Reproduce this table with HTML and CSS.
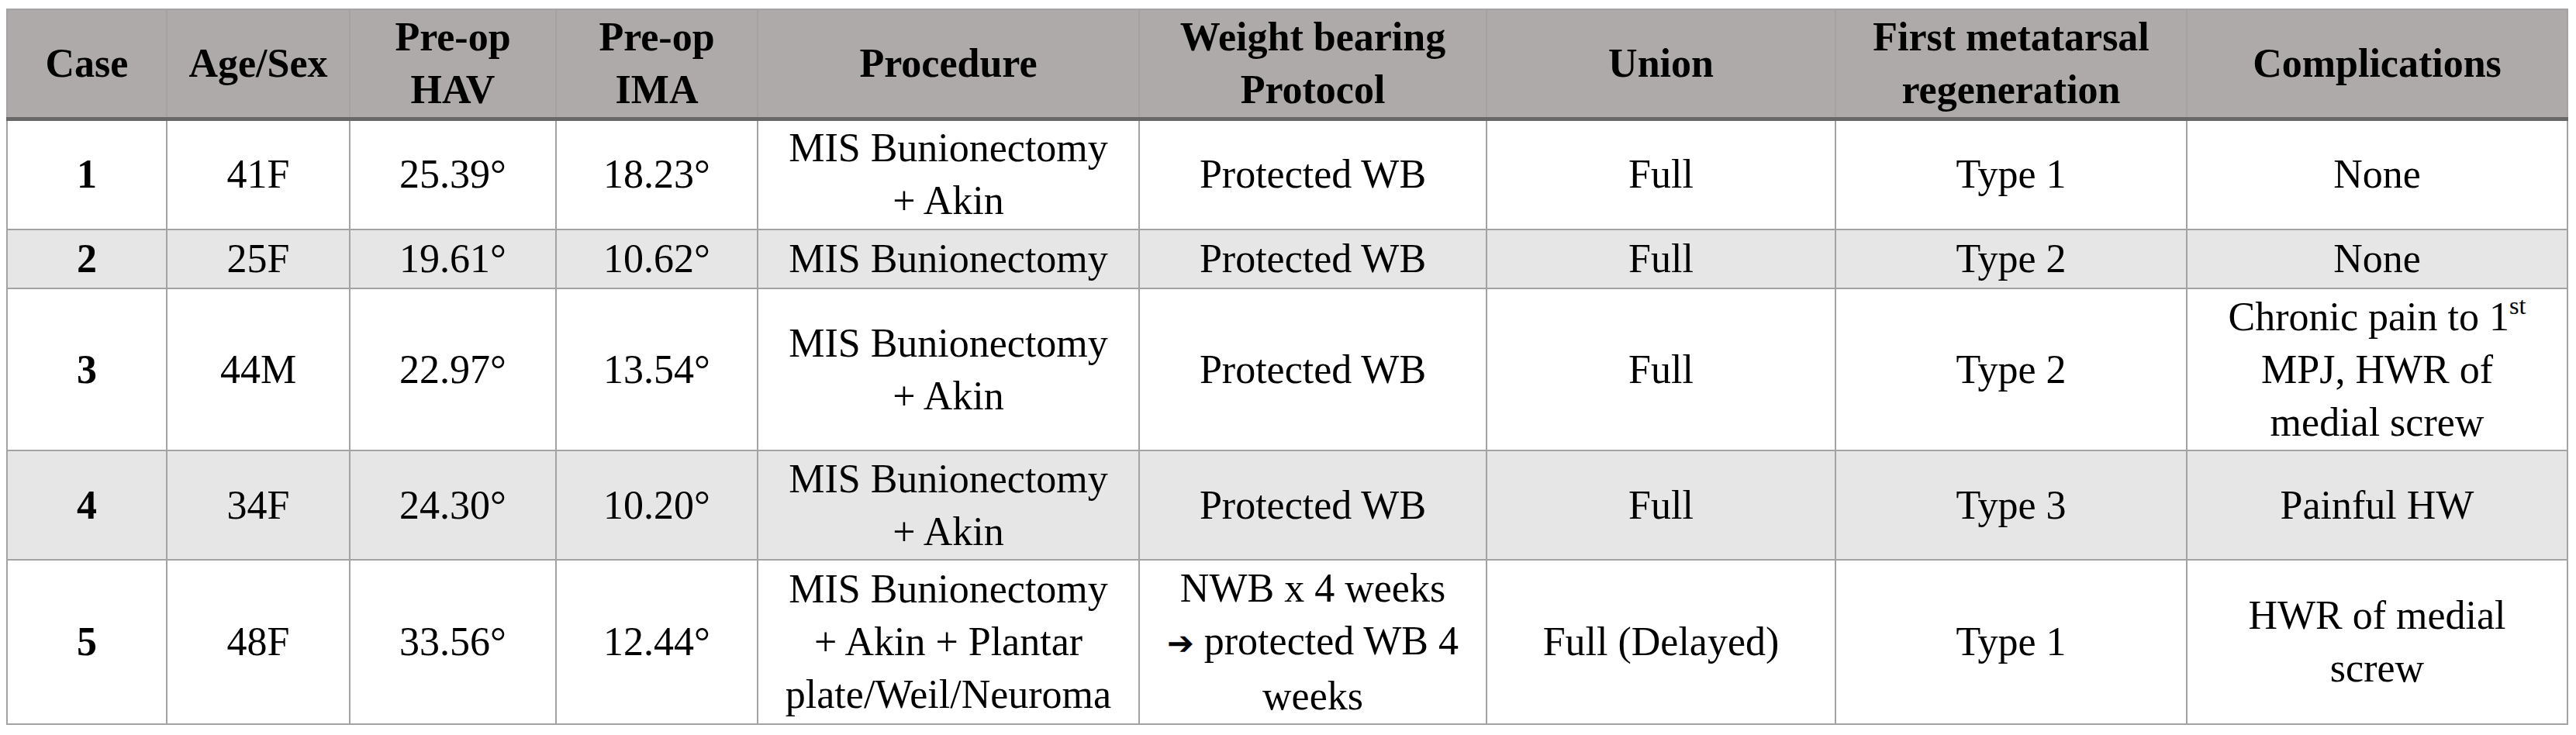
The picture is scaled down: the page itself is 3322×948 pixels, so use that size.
FILE: index.html
```html
<!DOCTYPE html>
<html lang="en">
<head>
<meta charset="utf-8">
<title>Cases</title>
<link rel="stylesheet" href="styles.css">
</head>
<body>
<table class="cases">
  <colgroup>
    <col class="w-case">
    <col class="w-age">
    <col class="w-hav">
    <col class="w-ima">
    <col class="w-proc">
    <col class="w-wb">
    <col class="w-union">
    <col class="w-regen">
    <col class="w-comp">
  </colgroup>
  <thead>
    <tr class="r-head">
      <th>Case</th>
      <th>Age/Sex</th>
      <th>Pre-op<br>HAV</th>
      <th>Pre-op<br>IMA</th>
      <th>Procedure</th>
      <th>Weight bearing<br>Protocol</th>
      <th>Union</th>
      <th>First metatarsal<br>regeneration</th>
      <th>Complications</th>
    </tr>
  </thead>
  <tbody>
    <tr class="r1">
      <td class="case">1</td>
      <td>41F</td>
      <td>25.39°</td>
      <td>18.23°</td>
      <td>MIS Bunionectomy<br>+ Akin</td>
      <td>Protected WB</td>
      <td>Full</td>
      <td>Type 1</td>
      <td>None</td>
    </tr>
    <tr class="r2 alt">
      <td class="case">2</td>
      <td>25F</td>
      <td>19.61°</td>
      <td>10.62°</td>
      <td>MIS Bunionectomy</td>
      <td>Protected WB</td>
      <td>Full</td>
      <td>Type 2</td>
      <td>None</td>
    </tr>
    <tr class="r3">
      <td class="case">3</td>
      <td>44M</td>
      <td>22.97°</td>
      <td>13.54°</td>
      <td>MIS Bunionectomy<br>+ Akin</td>
      <td>Protected WB</td>
      <td>Full</td>
      <td>Type 2</td>
      <td>Chronic pain to 1<sup>st</sup><br>MPJ, HWR of<br>medial screw</td>
    </tr>
    <tr class="r4 alt">
      <td class="case">4</td>
      <td>34F</td>
      <td>24.30°</td>
      <td>10.20°</td>
      <td>MIS Bunionectomy<br>+ Akin</td>
      <td>Protected WB</td>
      <td>Full</td>
      <td>Type 3</td>
      <td>Painful HW</td>
    </tr>
    <tr class="r5">
      <td class="case">5</td>
      <td>48F</td>
      <td>33.56°</td>
      <td>12.44°</td>
      <td>MIS Bunionectomy<br>+ Akin + Plantar<br>plate/Weil/Neuroma</td>
      <td>NWB x 4 weeks<br><span class="arrow">➔</span> protected WB 4<br>weeks</td>
      <td>Full (Delayed)</td>
      <td>Type 1</td>
      <td>HWR of medial<br>screw</td>
    </tr>
  </tbody>
</table>
</body>
</html>
```

FILE: styles.css
```css
html, body {
  background: #ffffff;
}

body {
  margin: 11px 0 0 8px;
}

.cases {
  border-collapse: collapse;
  table-layout: fixed;
  width: 3304px;
  font-family: "Liberation Serif", "Times New Roman", serif;
  font-size: 52px;
  line-height: 68px;
  color: #000000;
  border: 2px solid #a3a3a3;
}

.w-case { width: 206px; }
.w-age { width: 236px; }
.w-hav { width: 266px; }
.w-ima { width: 260px; }
.w-proc { width: 492px; }
.w-wb { width: 448px; }
.w-union { width: 450px; }
.w-regen { width: 453px; }
.w-comp { width: 491px; }

.cases th,
.cases td {
  border: 2px solid #a3a3a3;
  padding: 0 4px;
  text-align: center;
  vertical-align: middle;
  white-space: nowrap;
}

.cases thead th {
  background: #aeaaaa;
  font-weight: 700;
  border-bottom: 5px solid #686868;
}

.alt td {
  background: #e7e6e6;
}

.case {
  font-weight: 700;
}

.cases sup {
  font-size: 0.62em;
  line-height: 0;
  vertical-align: 0.66em;
}

.arrow {
  font-family: "DejaVu Sans", sans-serif;
  font-weight: 700;
  font-size: 0.8em;
}

.r-head { height: 141px; }
.r1 { height: 143px; }
.r2 { height: 76px; }
.r3 { height: 209px; }
.r4 { height: 141px; }
.r5 { height: 212px; }
```
